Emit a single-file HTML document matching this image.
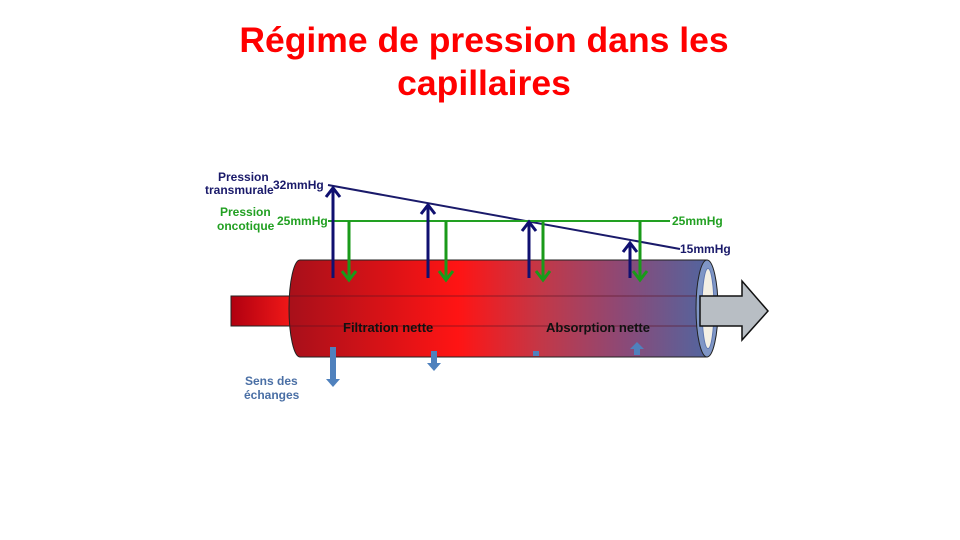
<!DOCTYPE html>
<html><head><meta charset="utf-8"><style>
body{margin:0;background:#fff;width:960px;height:540px;overflow:hidden}
svg{display:block}
</style></head><body>
<svg width="960" height="540" viewBox="0 0 960 540" font-family="Liberation Sans, sans-serif">
<defs>
<linearGradient id="g" x1="290" x2="710" y1="0" y2="0" gradientUnits="userSpaceOnUse">
<stop offset="0" stop-color="#a8101a"/><stop offset="0.4" stop-color="#ff1414"/>
<stop offset="0.6" stop-color="#c23848"/><stop offset="0.8" stop-color="#8a4a78"/><stop offset="1" stop-color="#5066a0"/>
</linearGradient>
<linearGradient id="g2" x1="231" x2="290" y1="0" y2="0" gradientUnits="userSpaceOnUse">
<stop offset="0" stop-color="#b00010"/><stop offset="1" stop-color="#f01818"/></linearGradient>
</defs>
<text x="484" y="52" text-anchor="middle" font-size="35.5" font-weight="bold" fill="#ff0000">Régime de pression dans les</text>
<text x="484" y="95" text-anchor="middle" font-size="35.5" font-weight="bold" fill="#ff0000">capillaires</text>
<rect x="231" y="296" width="64" height="30" fill="url(#g2)" stroke="#222" stroke-width="1"/>
<path d="M300 260 H707 V357 H300 A11 48.5 0 0 1 300 260 Z" fill="url(#g)" stroke="#222" stroke-width="1"/>
<line x1="290" y1="296" x2="707" y2="296" stroke="#5a1020" stroke-opacity="0.6"/>
<line x1="290" y1="326" x2="707" y2="326" stroke="#5a1020" stroke-opacity="0.6"/>
<ellipse cx="707" cy="308.5" rx="11" ry="48.5" fill="#7f96c6" stroke="#222"/>
<ellipse cx="708" cy="308.5" rx="6" ry="40" fill="#f4f0e4" stroke="#6078b0"/>
<path d="M700 296 H742 V281 L768 311 L742 340 V326 H700 Z" fill="#b8bec4" stroke="#111" stroke-width="1.5"/>
<line x1="328" y1="185" x2="680" y2="249" stroke="#1a1a6a" stroke-width="2"/>
<line x1="328" y1="221" x2="670" y2="221" stroke="#22a022" stroke-width="2"/>
<g stroke="#101070" stroke-width="3" fill="none">
<path d="M333 278V188M326 197L333 188L340 197"/>
<path d="M428 278V205M421 214L428 205L435 214"/>
<path d="M529 278V222M522 231L529 222L536 231"/>
<path d="M630 278V243M623 252L630 243L637 252"/>
</g>
<g stroke="#1a9a1a" stroke-width="3" fill="none">
<path d="M349 221V280M342 271L349 280L356 271"/>
<path d="M446 221V280M439 271L446 280L453 271"/>
<path d="M543 221V280M536 271L543 280L550 271"/>
<path d="M640 221V280M633 271L640 280L647 271"/>
</g>
<g fill="#4f81bd">
<path d="M330 347h6v32h4l-7 8l-7-8h4z"/>
<path d="M431 351h6v12h4l-7 8l-7-8h4z"/>
<rect x="533" y="351" width="6" height="5"/>
<path d="M634 355h6v-6h4l-7-7l-7 7h4z"/>
</g>
<g font-size="12" font-weight="bold">
<text x="218" y="181" fill="#1a1a6a">Pression</text>
<text x="205" y="194" fill="#1a1a6a">transmurale</text>
<text x="273" y="189" fill="#1a1a6a">32mmHg</text>
<text x="220" y="216" fill="#22a022">Pression</text>
<text x="217" y="230" fill="#22a022">oncotique</text>
<text x="277" y="225" fill="#22a022">25mmHg</text>
<text x="672" y="225" fill="#22a022">25mmHg</text>
<text x="680" y="253" fill="#1a1a6a">15mmHg</text>
<text x="343" y="332" fill="#111" font-size="13">Filtration nette</text>
<text x="546" y="332" fill="#111" font-size="13">Absorption nette</text>
<text x="245" y="385" fill="#4a6fa5">Sens des</text>
<text x="244" y="399" fill="#4a6fa5">échanges</text>
</g>
</svg>
</body></html>
